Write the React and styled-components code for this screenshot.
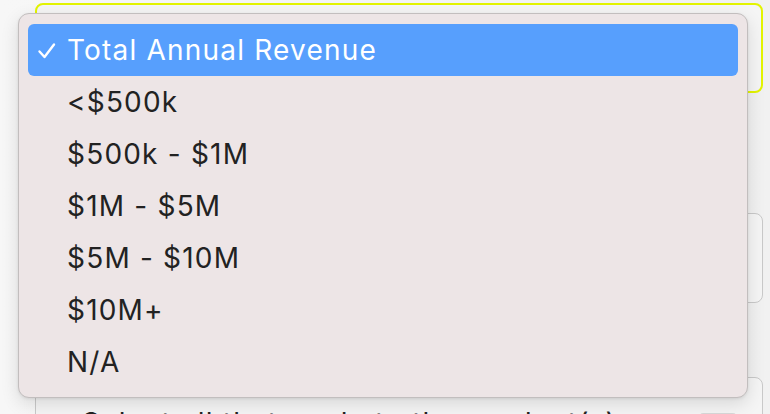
import React from "react";
import styled, { createGlobalStyle } from "styled-components";

const GlobalStyle = createGlobalStyle`
  html, body {
    margin: 0;
    padding: 0;
    background: #f3f3f3;
    overflow: hidden;
  }
  body {
    font-family: Inter, "Liberation Sans", Arial, sans-serif;
  }
`;

const Page = styled.div`
  position: relative;
  width: 770px;
  height: 414px;
  overflow: hidden;
  background: linear-gradient(to right, #f7f7f7 0%, #f1f1f1 100%);
`;

const Form = styled.div`
  display: flex;
  flex-direction: column;
  padding: 3px 7px 0 35px;
`;

const Field = styled.div`
  height: ${(props) => props.height || 90}px;
  margin-bottom: ${(props) => props.gap || 0}px;
  border: ${(props) => (props.focused ? "2px solid #e3f400" : "1.5px solid #c9c9c9")};
  border-radius: 8px;
  background: #f5f5f5;
  box-sizing: border-box;
  display: flex;
  align-items: flex-start;
  padding: 31px 26px 0 46px;
  gap: 14px;
`;

const FieldText = styled.span`
  font-size: 28px;
  color: #222;
  line-height: 1;
  letter-spacing: 1.2px;
  white-space: nowrap;
`;

const FieldArrow = styled.span`
  margin-left: auto;
  margin-top: 4px;
  width: 36px;
  height: 6px;
  border-radius: 3px 3px 0 0;
  background: #d8d8d8;
`;

const Menu = styled.div`
  position: absolute;
  left: 18px;
  top: 13px;
  width: 730px;
  height: 385px;
  box-sizing: border-box;
  padding: 10px 9px 11px 9px;
  background: #ede5e6;
  border: 1px solid #c2bebe;
  border-radius: 11px;
  box-shadow: 0 6px 18px rgba(0, 0, 0, 0.12), 0 1px 3px rgba(0, 0, 0, 0.08);
  display: flex;
  flex-direction: column;
`;

const Option = styled.div`
  height: 52px;
  flex-shrink: 0;
  display: flex;
  align-items: center;
  border-radius: 6px;
  padding-left: 9px;
  background: ${(props) => (props.selected ? "#579ffd" : "transparent")};
  color: ${(props) => (props.selected ? "#ffffff" : "#222222")};
  font-size: 28px;
  letter-spacing: 1.2px;
`;

const Check = styled.span`
  width: 30px;
  height: 20px;
  display: flex;
  align-items: center;
  margin-top: 2px;
`;

const Label = styled.span`
  white-space: nowrap;
  line-height: 1;
`;

const options = [
  "Total Annual Revenue",
  "<$500k",
  "$500k - $1M",
  "$1M - $5M",
  "$5M - $10M",
  "$10M+",
  "N/A",
];

function CheckMark() {
  return (
    <svg width="20" height="18" viewBox="0 0 20 18" fill="none">
      <path
        d="M2.5 9.5 L7.5 15 L17 2.5"
        stroke="#ffffff"
        strokeWidth="2.4"
        strokeLinecap="round"
        strokeLinejoin="round"
      />
    </svg>
  );
}

export default function App() {
  return (
    <Page>
      <GlobalStyle />
      <Form>
        <Field focused height={90} gap={120} />
        <Field height={90} gap={74} />
        <Field height={60}>
          <FieldText>Select all that apply to the product(s)</FieldText>
          <FieldArrow />
        </Field>
      </Form>
      <Menu>
        {options.map((opt, i) => (
          <Option key={opt} selected={i === 0}>
            <Check>{i === 0 && <CheckMark />}</Check>
            <Label>{opt}</Label>
          </Option>
        ))}
      </Menu>
    </Page>
  );
}
